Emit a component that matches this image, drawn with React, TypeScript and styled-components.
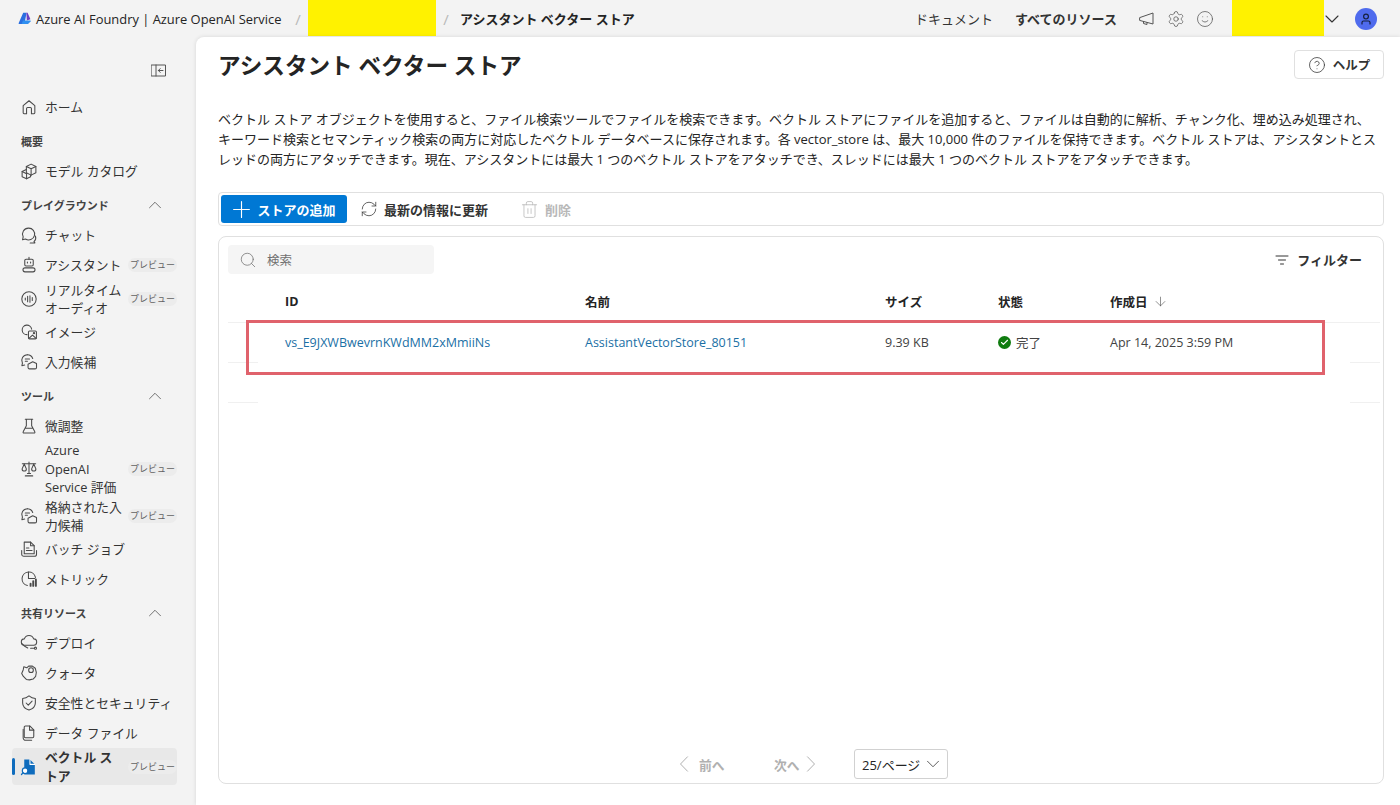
import React from "react";
import styled, { createGlobalStyle } from "styled-components";
import {
  ChevronDown,
  ChevronUp,
  CircleHelp,
  Plus,
  RefreshCw,
  Search,
  Settings,
  Smile,
  Trash2,
  ArrowDown,
  Check,
} from "lucide-react";

const GlobalStyle = createGlobalStyle`
  html, body {
    margin: 0;
    padding: 0;
    overflow: hidden;
    background: #f3f3f3;
  }
  body {
    font-family: "Open Sans", "Noto Sans CJK JP", sans-serif;
    color: #242424;
  }
  * {
    box-sizing: border-box;
  }
`;

const Page = styled.div`
  width: 1400px;
  height: 805px;
  display: flex;
  flex-direction: column;
`;

const TopBar = styled.header`
  height: 37px;
  flex: none;
  display: flex;
  align-items: center;
  padding-left: 18px;
  font-size: 13px;
`;

const Brand = styled.span`
  margin-left: 5px;
  font-size: 12.9px;
  width: 252px;
  white-space: nowrap;
`;

const Slash = styled.span<{ $after?: number }>`
  color: #b8b8b8;
  font-size: 15px;
  width: 20px;
  margin-right: ${(p) => p.$after ?? 0}px;
  text-align: center;
`;

const Mask = styled.div<{ $width: number }>`
  width: ${(p) => p.$width}px;
  height: 36px;
  align-self: flex-start;
  background: #fff200;
  flex: none;
`;

const Crumb = styled.span`
  font-weight: 700;
  font-size: 13px;
  white-space: nowrap;
  width: 455px;
`;

const TopLink = styled.span<{ $bold?: boolean; $width: number }>`
  font-weight: ${(p) => (p.$bold ? 700 : 400)};
  font-size: 13px;
  width: ${(p) => p.$width}px;
  white-space: nowrap;
  color: #333;
`;

const TopIcons = styled.div`
  display: flex;
  align-items: center;
  gap: 11px;
  width: 110px;
  padding-left: 16px;
  color: #555;
`;

const OpenChevron = styled(ChevronDown)`
  margin-left: -4px;
  color: #333;
`;

const Avatar = styled.div`
  width: 22px;
  height: 22px;
  border-radius: 50%;
  background: #4f6bed;
  display: flex;
  align-items: center;
  justify-content: center;
  color: #16213f;
  margin-left: 11px;
`;

const Body = styled.div`
  flex: 1;
  display: flex;
  min-height: 0;
`;

const Sidebar = styled.nav`
  width: 196px;
  flex: none;
  padding: 0 19px 0 12px;
`;

const CollapseRow = styled.div`
  height: 55px;
  display: flex;
  justify-content: flex-end;
  align-items: flex-start;
  padding: 27px 11px 0 0;
  color: #555;
`;

const SectionHead = styled.div`
  height: 34px;
  padding: 3px 11px 0 9px;
  display: flex;
  align-items: center;
  justify-content: space-between;
  font-size: 11px;
  font-weight: 700;
  color: #424242;
`;

const NavItem = styled.div<{ $height?: number; $active?: boolean; $gapTop?: number }>`
  position: relative;
  height: ${(p) => p.$height ?? 30}px;
  margin-top: ${(p) => p.$gapTop ?? 0}px;
  display: flex;
  align-items: center;
  gap: 7px;
  padding-left: 8px;
  border-radius: 4px;
  background: ${(p) => (p.$active ? "#e8e8e8" : "transparent")};
  font-weight: ${(p) => (p.$active ? 700 : 400)};
  color: #333;
`;

const ActiveMark = styled.span`
  position: absolute;
  left: 0;
  top: 10px;
  width: 3px;
  height: 17px;
  border-radius: 2px;
  background: #0f6cbd;
`;

const NavIcon = styled.span`
  width: 18px;
  height: 18px;
  flex: none;
  color: #4a4a4a;
  display: flex;
  align-items: center;
  justify-content: center;
`;

const NavLabel = styled.span`
  flex: 1;
  min-width: 0;
  font-size: 12.8px;
  line-height: 18.5px;
`;

const Badge = styled.span`
  flex: none;
  width: 49px;
  height: 14px;
  margin-left: -5px;
  border-radius: 7px;
  background: #ececec;
  color: #616161;
  font-size: 9px;
  line-height: 14px;
  text-align: center;
  font-weight: 400;
`;

const Main = styled.main`
  flex: 1;
  background: #fff;
  border-top-left-radius: 8px;
  box-shadow: 0 0 4px rgba(0, 0, 0, 0.12);
  padding: 0 16px 21px 22px;
  display: flex;
  flex-direction: column;
`;

const TitleRow = styled.div`
  height: 69px;
  display: flex;
  justify-content: space-between;
  align-items: flex-start;
`;

const Title = styled.h1`
  margin: 12px 0 0;
  font-size: 22.6px;
  line-height: 34px;
  font-weight: 700;
  white-space: nowrap;
`;

const HelpButton = styled.button`
  margin-top: 13px;
  width: 90px;
  height: 29px;
  background: #fff;
  border: 1px solid #e0e0e0;
  border-radius: 4px;
  display: flex;
  align-items: center;
  justify-content: center;
  gap: 7px;
  font: inherit;
  font-size: 12.5px;
  font-weight: 700;
  color: #333;
`;

const Intro = styled.p`
  margin: 3px 0 23px;
  font-size: 13px;
  line-height: 20px;
  color: #242424;
  white-space: nowrap;
`;

const Toolbar = styled.div`
  height: 34px;
  border: 1px solid #e0e0e0;
  border-radius: 4px;
  padding: 2px;
  display: flex;
  align-items: stretch;
`;

const PrimaryButton = styled.button`
  width: 126px;
  background: #0078d4;
  color: #fff;
  border: 0;
  border-radius: 3px;
  display: flex;
  align-items: center;
  justify-content: center;
  gap: 2px;
  padding: 0 4px 0 0;
  font: inherit;
  font-size: 13px;
  font-weight: 700;
`;

const ToolButton = styled.span<{ $disabled?: boolean; $left: number }>`
  margin-left: ${(p) => p.$left}px;
  display: flex;
  align-items: center;
  gap: 6px;
  font-size: 13px;
  font-weight: 700;
  color: ${(p) => (p.$disabled ? "#b8b8b8" : "#333")};
`;

const Card = styled.section`
  position: relative;
  flex: 1;
  margin-top: 10px;
  border: 1px solid #e0e0e0;
  border-radius: 8px;
  padding: 8px 3px 0 9px;
  display: flex;
  flex-direction: column;
`;

const CardTop = styled.div`
  height: 29px;
  display: flex;
  justify-content: space-between;
  align-items: center;
`;

const SearchBox = styled.div`
  width: 206px;
  height: 29px;
  background: #f5f5f5;
  border-radius: 4px;
  display: flex;
  align-items: center;
  gap: 10px;
  padding-left: 11px;
  font-size: 12.5px;
  color: #707070;
`;

const FilterButton = styled.span`
  display: flex;
  align-items: center;
  gap: 8px;
  margin-right: 18px;
  font-size: 13px;
  font-weight: 700;
  color: #333;
`;

const Row = styled.div<{ $height: number; $top?: number; $line?: boolean }>`
  display: grid;
  grid-template-columns: 30px 27px 300px 300px 113px 112px 240px 30px;
  align-items: center;
  height: ${(p) => p.$height}px;
  margin-top: ${(p) => p.$top ?? 0}px;
  border-bottom: ${(p) => (p.$line ? "1px solid #f0f0f0" : "0")};
  font-size: 12.5px;
`;

const EdgeCell = styled.div`
  height: 100%;
  border-bottom: 1px solid #f0f0f0;
`;

const HeadCell = styled.div`
  font-weight: 700;
  display: flex;
  align-items: center;
  gap: 5px;
  padding-bottom: 3px;
  color: #242424;
`;

const LinkCell = styled.a`
  color: #1a6fa5;
  margin-bottom: 2px;
  white-space: nowrap;
`;

const Cell = styled.div`
  color: #424242;
  display: flex;
  align-items: center;
  gap: 5px;
  margin-bottom: 2px;
  white-space: nowrap;
`;

const StatusDot = styled.span`
  width: 13px;
  height: 13px;
  border-radius: 50%;
  background: #107c10;
  color: #fff;
  display: flex;
  align-items: center;
  justify-content: center;
`;

const Highlight = styled.div`
  position: absolute;
  left: 27px;
  top: 83px;
  width: 1079px;
  height: 55px;
  border: 3px solid #e0626c;
  pointer-events: none;
`;

const Pager = styled.div`
  margin-top: auto;
  height: 34px;
  display: flex;
  align-items: flex-start;
  padding-left: 451px;
  font-size: 12.8px;
  font-weight: 700;
  color: #b0b0b0;
`;

const PagerStep = styled.span<{ $width: number; $gap: number }>`
  width: ${(p) => p.$width}px;
  height: 30px;
  display: flex;
  align-items: center;
  gap: ${(p) => p.$gap}px;
`;

const PageSize = styled.div`
  width: 94px;
  height: 30px;
  border: 1px solid #d1d1d1;
  border-radius: 3px;
  display: flex;
  align-items: center;
  justify-content: space-between;
  padding: 0 3px 0 7px;
  font-size: 13px;
  font-weight: 400;
  white-space: nowrap;
  color: #242424;
`;

const stroke = { fill: "none", stroke: "currentColor", strokeWidth: 1, strokeLinecap: "round", strokeLinejoin: "round" } as const;

const Logo = () => (
  <svg width="13" height="13" viewBox="0 0 13 13">
    <path d="M5.2 0.8h3.4L6.4 12H1.2a.6.6 0 0 1-.5-.9z" fill="#2a6fe0" />
    <path d="M8.4 0.8h1.2l2.8 6.4-3.6 1.2z" fill="#6b3fc4" />
    <path d="M5 8.4h7.2c.5 0 .7.6.4 1L10 12H3.6z" fill="#2f8ff0" />
  </svg>
);

const Icon = ({ children }: { children: React.ReactNode }) => (
  <svg width="18" height="18" viewBox="0 0 17 17" {...stroke}>
    {children}
  </svg>
);

const icons: Record<string, React.ReactNode> = {
  home: <path d="M3 7.2 8.5 2.6 14 7.2V14a.8.8 0 0 1-.8.8h-2.4V10a1 1 0 0 0-1-1H7.2a1 1 0 0 0-1 1v4.8H3.8A.8.8 0 0 1 3 14z" />,
  catalog: (
    <>
      <path d="M6 4.2 10.5 2 15 4.2v6L10.5 12.4 6 10.2z" />
      <path d="M6 4.2l4.5 2.2L15 4.2M10.5 6.4v6" />
      <path d="M6 7 2 9v5l4.2 1.8L10 14v-1.6" />
      <path d="M2 9l4.2 2M6.2 11v4.8" />
    </>
  ),
  chat: (
    <>
      <path d="M8 2a5.6 5.6 0 0 0-5 8.2L2.4 13l2.8-.7A5.6 5.6 0 1 0 8 2z" />
      <path d="M14.6 9.5a5 5 0 0 1-1.4 5.3l.9 1.2H9.6" />
    </>
  ),
  assistant: (
    <>
      <rect x="4.5" y="3" width="8" height="6.5" rx="1.2" />
      <path d="M7 5.6v.9M10 5.6v.9M8.5 1.2V3" />
      <rect x="2.8" y="11.2" width="11.4" height="3.8" rx="1.9" />
    </>
  ),
  audio: (
    <>
      <circle cx="8.5" cy="8.5" r="6.8" />
      <path d="M5 7.6v1.8M7.2 6v5M9.4 5.4v6.2M11.6 7.2v2.6" />
    </>
  ),
  image: (
    <>
      <path d="M6.6 11A4.5 4.5 0 1 1 11 5.8" />
      <rect x="8" y="7.5" width="7.5" height="7.5" rx="1" />
      <path d="M8.4 14.6l3.4-3.2 3.4 3.2" />
      <circle cx="13.2" cy="9.6" r=".6" />
    </>
  ),
  complete: (
    <>
      <path d="M7 1.6a5.4 5.4 0 0 0-4.7 8L1.8 12l2.6-.6" />
      <path d="M7 1.6a5.4 5.4 0 0 1 5 3.6" />
      <path d="M5 5.6h4M5 7.8h2" />
      <path d="M7.6 10.6 12 8.2l3.6 1.8v3.6a1.4 1.4 0 0 1-1.4 1.4H9a1.4 1.4 0 0 1-1.4-1.4z" />
    </>
  ),
  tune: <path d="M5 2.2h7M6 2.2v6L3 14a.8.8 0 0 0 .7 1.2h9.6A.8.8 0 0 0 14 14l-3-5.8v-6M4.8 10.6h7.4" />,
  scale: (
    <>
      <path d="M2.2 3.6h12.6M8.5 2v10.8M5 15h7M7 12.8h3" />
      <path d="M4 3.8 2 8.4a2 2 0 0 0 4 0zM13 3.8l-2 4.6a2 2 0 0 0 4 0z" />
    </>
  ),
  batch: (
    <>
      <path d="M4 2h6l3.4 3.4V13H4z" />
      <path d="M10 2v3.4h3.4M6 7.6h2.4M6 10h5.4" />
      <path d="M1.6 10v3.4a2 2 0 0 0 2 2h10a2 2 0 0 0 2-2V10" />
    </>
  ),
  metric: (
    <>
      <path d="M7 14.6A6.4 6.4 0 1 1 14.6 7" />
      <path d="M8 2v6h6" />
      <path d="M10 15v-2M12.5 15v-4.5M15 15V9" strokeWidth="1.8" />
    </>
  ),
  deploy: (
    <>
      <path d="M4.4 10.6a3 3 0 0 1-.3-6 4.6 4.6 0 0 1 8.8 0 3 3 0 0 1-.3 6z" />
      <path d="M1.5 8.8l3 2.8 2.8 1.6M10 13.4h3.6" />
      <circle cx="14.6" cy="13.4" r="1" />
    </>
  ),
  quota: (
    <>
      <path d="M6.4 3.6 3.6 2.6l-.6 3L1.6 9l1.6 2.8L6 14.6l3 .4 3.4-.8 2.4-2.6.6-3.6-1-4-3-2.2-3.2.2z" />
      <circle cx="10.4" cy="5.8" r="2.2" />
    </>
  ),
  shield: (
    <>
      <path d="M8.5 1.8c1.8 1.5 3.8 2.3 6 2.4v4.2c0 3.2-2 5.4-6 6.8-4-1.4-6-3.6-6-6.8V4.2c2.2-.1 4.2-.9 6-2.4z" />
      <path d="M5.8 8.5l2 2 3.6-3.8" />
    </>
  ),
  file: (
    <>
      <path d="M4 3a1.2 1.2 0 0 1 1.2-1.2h4L13 5.6v6.2a1.2 1.2 0 0 1-1.2 1.2H5.2A1.2 1.2 0 0 1 4 11.8z" />
      <path d="M9 1.8v4h4M3 5v8a2.4 2.4 0 0 0 2.4 2.4H11" />
    </>
  ),
  vector: (
    <>
      <path d="M4 1.5h5.4L14 6v9.5H4z" fill="#0f6cbd" stroke="none" />
      <path d="M9.4 1.5V6H14" stroke="#fff" />
      <circle cx="4.8" cy="12" r="2.6" fill="#fff" stroke="#0f6cbd" strokeWidth="1.1" />
      <path d="M2.8 14 1.4 15.6" stroke="#0f6cbd" strokeWidth="1.2" />
    </>
  ),
};

type NavEntry = {
  icon: string;
  label: React.ReactNode;
  preview?: boolean;
  height?: number;
  gapTop?: number;
  active?: boolean;
};

const NavRow = ({ icon, label, preview, height, gapTop, active }: NavEntry) => (
  <NavItem $height={height} $gapTop={gapTop} $active={active}>
    {active && <ActiveMark />}
    <NavIcon>
      <Icon>{icons[icon]}</Icon>
    </NavIcon>
    <NavLabel>{label}</NavLabel>
    {preview && <Badge>プレビュー</Badge>}
  </NavItem>
);

const Section = ({ children }: { children: React.ReactNode }) => (
  <SectionHead>
    {children}
    <ChevronUp size={22} strokeWidth={0.8} />
  </SectionHead>
);

const PagerChevron = ({ d }: { d: string }) => (
  <svg width="10" height="16" viewBox="0 0 10 16" {...stroke}>
    <path d={d} />
  </svg>
);

export default function App() {
  return (
    <Page>
      <GlobalStyle />
      <TopBar>
        <Logo />
        <Brand>Azure AI Foundry | Azure OpenAI Service</Brand>
        <Slash>/</Slash>
        <Mask $width={128} />
        <Slash $after={4}>/</Slash>
        <Crumb>アシスタント ベクター ストア</Crumb>
        <TopLink $width={100}>ドキュメント</TopLink>
        <TopLink $width={107} $bold>
          すべてのリソース
        </TopLink>
        <TopIcons>
          <svg width="18" height="18" viewBox="0 0 18 18" {...stroke}>
            <path d="M2 7.5 15 3v11L2 10.5z" />
            <path d="M5.5 11.5v2l3.5 1v-2" />
          </svg>
          <Settings size={18} strokeWidth={1} />
          <Smile size={18} strokeWidth={1} />
        </TopIcons>
        <Mask $width={92} />
        <OpenChevron size={24} strokeWidth={1.1} />
        <Avatar>
          <svg width="12" height="12" viewBox="0 0 12 12" {...stroke} strokeWidth={1.2}>
            <circle cx="6" cy="3.6" r="2.4" />
            <path d="M2 11V9.6c0-1 .8-1.6 1.6-1.6h4.8c.8 0 1.6.6 1.6 1.6V11" />
          </svg>
        </Avatar>
      </TopBar>
      <Body>
        <Sidebar>
          <CollapseRow>
            <svg width="15" height="13" viewBox="0 0 15 13" {...stroke}>
              <rect x=".5" y="1" width="14" height="11" />
              <path d="M5 1v11M12 6.5H7.4M9.2 4.6 7.4 6.5l1.8 1.9" />
            </svg>
          </CollapseRow>
          <NavRow icon="home" label="ホーム" />
          <SectionHead>概要</SectionHead>
          <NavRow icon="catalog" label="モデル カタログ" />
          <Section>プレイグラウンド</Section>
          <NavRow icon="chat" label="チャット" />
          <NavRow icon="assistant" label="アシスタント" preview />
          <NavRow
            icon="audio"
            label={
              <>
                リアルタイム
                <br />
                オーディオ
              </>
            }
            preview
            height={36}
            gapTop={1}
          />
          <NavRow icon="image" label="イメージ" />
          <NavRow icon="complete" label="入力候補" />
          <Section>ツール</Section>
          <NavRow icon="tune" label="微調整" />
          <NavRow
            icon="scale"
            label={
              <>
                Azure
                <br />
                OpenAI
                <br />
                Service 評価
              </>
            }
            preview
            height={56}
          />
          <NavRow
            icon="complete"
            label={
              <>
                格納された入
                <br />
                力候補
              </>
            }
            preview
            height={36}
            gapTop={1}
          />
          <NavRow icon="batch" label="バッチ ジョブ" />
          <NavRow icon="metric" label="メトリック" />
          <Section>共有リソース</Section>
          <NavRow icon="deploy" label="デプロイ" />
          <NavRow icon="quota" label="クォータ" />
          <NavRow icon="shield" label="安全性とセキュリティ" />
          <NavRow icon="file" label="データ ファイル" />
          <NavRow
            icon="vector"
            label={
              <>
                ベクトル ス
                <br />
                トア
              </>
            }
            preview
            height={37}
          

            active
          />
        </Sidebar>
        <Main>
          <TitleRow>
            <Title>アシスタント ベクター ストア</Title>
            <HelpButton>
              <CircleHelp size={18} strokeWidth={1} />
              ヘルプ
            </HelpButton>
          </TitleRow>
          <Intro>
            ベクトル ストア オブジェクトを使用すると、ファイル検索ツールでファイルを検索できます。ベクトル ストアにファイルを追加すると、ファイルは自動的に解析、チャンク化、埋め込み処理され、
            <br />
            キーワード検索とセマンティック検索の両方に対応したベクトル データベースに保存されます。各 vector_store は、最大 10,000 件のファイルを保持できます。ベクトル ストアは、アシスタントとス
            <br />
            レッドの両方にアタッチできます。現在、アシスタントには最大 1 つのベクトル ストアをアタッチでき、スレッドには最大 1 つのベクトル ストアをアタッチできます。
          </Intro>
          <Toolbar>
            <PrimaryButton>
              <Plus size={27} strokeWidth={1} />
              ストアの追加
            </PrimaryButton>
            <ToolButton $left={13}>
              <RefreshCw size={18} strokeWidth={1} />
              最新の情報に更新
            </ToolButton>
            <ToolButton $left={32} $disabled>
              <Trash2 size={19} strokeWidth={1} />
              削除
            </ToolButton>
          </Toolbar>
          <Card>
            <CardTop>
              <SearchBox>
                <Search size={18} strokeWidth={1} />
                検索
              </SearchBox>
              <FilterButton>
                <svg width="14" height="14" viewBox="0 0 14 14" {...stroke}>
                  <path d="M1 3h12M3.5 7h7M5.5 11h3" />
                </svg>
                フィルター
              </FilterButton>
            </CardTop>
            <Row $height={40} $top={9} $line>
              <span />
              <span />
              <HeadCell>ID</HeadCell>
              <HeadCell>名前</HeadCell>
              <HeadCell>サイズ</HeadCell>
              <HeadCell>状態</HeadCell>
              <HeadCell>
                作成日
                <ArrowDown size={15} strokeWidth={1} color="#505050" />
              </HeadCell>
              <span />
            </Row>
            <Row $height={40}>
              <EdgeCell />
              <span />
              <LinkCell>vs_E9JXWBwevrnKWdMM2xMmiiNs</LinkCell>
              <LinkCell>AssistantVectorStore_80151</LinkCell>
              <Cell>9.39 KB</Cell>
              <Cell>
                <StatusDot>
                  <Check size={9} strokeWidth={3} />
                </StatusDot>
                完了
              </Cell>
              <Cell>Apr 14, 2025 3:59 PM</Cell>
              <EdgeCell />
            </Row>
            <Row $height={40}>
              <EdgeCell />
              <span />
              <span />
              <span />
              <span />
              <span />
              <span />
              <EdgeCell />
            </Row>
            <Highlight />
            <Pager>
              <PagerStep $width={95} $gap={10}>
                <PagerChevron d="M8.5 .8 1.5 8l7 7.2" />
                前へ
              </PagerStep>
              <PagerStep $width={80} $gap={6}>
                次へ
                <PagerChevron d="M1.5 .8 8.5 8l-7 7.2" />
              </PagerStep>
              <PageSize>
                25/ページ
                <ChevronDown size={22} strokeWidth={0.8} />
              </PageSize>
            </Pager>
          </Card>
        </Main>
      </Body>
    </Page>
  );
}
